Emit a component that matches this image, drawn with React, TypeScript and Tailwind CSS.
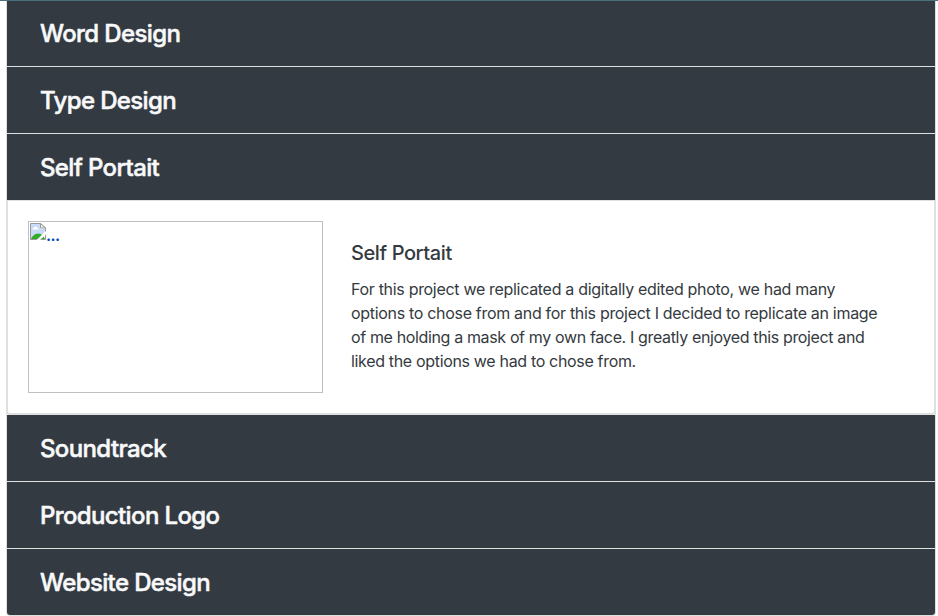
import React from "react";

function Header({ title, className = "h-[67px]" }: { title: string; className?: string }) {
  return (
    <div className={`flex items-center border-b border-[#dfdfdf] bg-[#343a41] pl-[33px] ${className}`}>
      <h2 className="text-[24px] leading-[29px] font-medium tracking-[-0.63px] text-[#f8f9fa] [-webkit-text-stroke:0.5px_#f8f9fa]">
        <span>{title}</span>
      </h2>
    </div>
  );
}

function BrokenImage() {
  return (
    <svg width="17" height="17" viewBox="0 0 17 17" className="shrink-0">
      <path d="M1.500 .5H11.500L16.500 5V16.500H1.500Z" fill="#fff" />
      <path d="M2 1H11V6H16V9L8 16H2Z" fill="#c8dbf9" />
      <path d="M3.500 6.500Q3.500 5 5 4.500Q6.500 2.500 8 4.500Q9.500 5 9.500 6.500Z" fill="#fff" />
      <path d="M2 16Q4 11 9 10.500Q12 10.500 14 12.500L16 16Z" fill="#35ab2b" />
      <path d="M1.500 .5H11.500L16.500 5V16.500H1.500Z" fill="none" stroke="#999" />
      <path d="M11.500 .5V5H16.500Z" fill="#eee" stroke="#999" />
      <path d="M7.500 17L17 8V11.500L11 17Z" fill="#fff" />
    </svg>
  );
}

export default function App() {
  return (
    <main className="h-[616px] w-[938px] overflow-hidden bg-white font-['Inter','Liberation_Sans',sans-serif]">
      <div className="h-px bg-[#4b6f7c]" />
      <div className="ml-[6px] w-[930px] rounded-b-[4px] border-x border-b border-[#dfdfdf]">
        <Header title="Word Design" className="h-[66px]" />
        <Header title="Type Design" />
        <Header title="Self Portait" />
        <div className="-mx-px flex h-[214px] rounded-b-[4px] border-x-2 border-b-2 border-[#dfdfdf] bg-white pt-[20px] pl-[20px]">
          <div className="flex h-[172px] w-[295px] items-start border border-[#c0c0c0] pt-px text-[#0047bb]">
            <BrokenImage />
            <span className="text-[16px] leading-[24px] font-semibold tracking-[-0.6px]">...</span>
          </div>
          <div className="pt-[20px] pl-[28px] text-[#343a40]">
            <h5 className="mb-[12px] text-[20px] leading-[24px] font-medium tracking-[-0.4px]">
              <span>Self Portait</span>
            </h5>
            <div className="text-[16px] leading-[24px] whitespace-nowrap">
              <p className="tracking-[-0.31px]">For this project we replicated a digitally edited photo, we had many</p>
              <p className="tracking-[-0.31px]">options to chose from and for this project I decided to replicate an image</p>
              <p className="tracking-[-0.36px]">of me holding a mask of my own face. I greatly enjoyed this project and</p>
              <p className="tracking-[-0.33px]">liked the options we had to chose from.</p>
            </div>
          </div>
        </div>
        <Header title="Soundtrack" />
        <Header title="Production Logo" />
        <Header title="Website Design" className="h-[66px] rounded-b-[3px] border-b-0" />
      </div>
    </main>
  );
}
